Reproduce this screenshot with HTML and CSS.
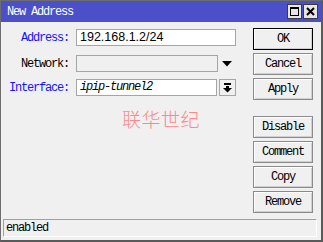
FILE: index.html
```html
<!DOCTYPE html>
<html>
<head>
<meta charset="utf-8">
<link rel="stylesheet" href="styles.css">
</head>
<body>
<div class="window">
  <div class="titlebar">
    <span class="title">New Address</span>
    <div class="tbtns">
      <div class="tbtn"><svg width="13" height="13" viewBox="0 0 13 13"><rect x="2.5" y="2.5" width="8" height="8" fill="none" stroke="#000" stroke-width="1"/><rect x="2" y="2" width="9" height="2" fill="#000"/></svg></div>
      <div class="tbtn"><svg width="13" height="13" viewBox="0 0 13 13"><path d="M3 3 L10 10 M10 3 L3 10" stroke="#000" stroke-width="2"/></svg></div>
    </div>
  </div>
  <div class="main">
    <div class="form">
      <div class="row r1">
        <label class="lbl blue">Address:</label>
        <div class="input w-addr">192.168.1.2/24</div>
      </div>
      <div class="row r2">
        <label class="lbl">Network:</label>
        <div class="input disabled w-net"></div>
        <div class="arrow"><svg width="10" height="6" viewBox="0 0 10 6"><path d="M0 0 H10 L5 5.5 Z" fill="#000"/></svg></div>
      </div>
      <div class="row r3">
        <label class="lbl blue">Interface:</label>
        <div class="input w-if mono-it">ipip-tunnel2</div>
        <div class="ddbtn"><svg width="9" height="10" viewBox="0 0 9 10"><rect x="1" y="0" width="7" height="2" fill="#000"/><rect x="3" y="3" width="3" height="3" fill="#000"/><path d="M0 5 H9 L4.5 9.5 Z" fill="#000"/></svg></div>
      </div>
      <div class="watermark">联华世纪</div>
    </div>
    <div class="buttons">
      <div class="btn default">OK</div>
      <div class="btn">Cancel</div>
      <div class="btn">Apply</div>
      <div class="btn sep">Disable</div>
      <div class="btn">Comment</div>
      <div class="btn">Copy</div>
      <div class="btn">Remove</div>
    </div>
  </div>
  <div class="status">enabled</div>
</div>
</body>
</html>
```

FILE: styles.css
```css
html, body {
  margin: 0;
  padding: 0;
  background: #f0f0f0;
}
.window {
  width: 323px;
  height: 242px;
  box-sizing: border-box;
  border-left: 1px solid #6e6e6e;
  border-top: 1px solid #6e6e6e;
  border-right: 2px solid #5a5a5a;
  border-bottom: 2px solid #5a5a5a;
  background: #f0f0f0;
  display: flex;
  flex-direction: column;
  font-family: "Liberation Mono", "DejaVu Sans Mono", monospace;
  font-size: 12px;
  letter-spacing: -1.2px;
}
.titlebar {
  height: 21px;
  background: #4b50c8;
  display: flex;
  align-items: center;
  justify-content: space-between;
  padding-left: 6px;
  padding-right: 3px;
}
.title {
  color: #fff;
  font-size: 12px;
}
.tbtns {
  display: flex;
  gap: 1px;
}
.tbtn {
  width: 15px;
  height: 15px;
  box-sizing: border-box;
  background: #e6e6e6;
  border: 1px solid #3c3c3c;
  display: flex;
  align-items: center;
  justify-content: center;
}
.main {
  flex: 1;
  display: flex;
  justify-content: space-between;
}
.form {
  padding-top: 7px;
  display: flex;
  flex-direction: column;
}
.row {
  display: flex;
  align-items: center;
  height: 17px;
}
.r2 { margin-top: 9px; }
.r3 { margin-top: 7px; }
.lbl {
  width: 68px;
  text-align: right;
  margin-right: 7px;
  color: #000;
}
.lbl.blue { color: #1414ff; }
.input {
  height: 17px;
  box-sizing: border-box;
  background: #fff;
  border: 1px solid #a5a5a5;
  font-family: "Liberation Sans", Arial, sans-serif;
  font-size: 12.5px;
  letter-spacing: 0;
  line-height: 15px;
  padding-left: 3px;
  color: #000;
}
.input.disabled { background: #f0f0f0; }
.w-addr { width: 160px; }
.w-net { width: 142px; }
.w-if { width: 141px; }
.mono-it {
  font-family: "Liberation Mono", monospace;
  font-style: italic;
  font-size: 12px;
  letter-spacing: -1.2px;
}
.arrow {
  width: 18px;
  display: flex;
  justify-content: center;
  padding-top: 1px;
}
.ddbtn {
  width: 17px;
  height: 17px;
  box-sizing: border-box;
  margin-left: 2px;
  border: 1px solid #a5a5a5;
  background: #f0f0f0;
  display: flex;
  align-items: center;
  justify-content: center;
}
.watermark {
  margin-top: 12px;
  margin-left: 121px;
  font-family: "Noto Sans CJK SC", sans-serif;
  font-weight: 300;
  font-size: 19px;
  line-height: 22px;
  letter-spacing: 0.5px;
  color: #ff8888;
}
.buttons {
  padding-top: 6px;
  padding-right: 8px;
  display: flex;
  flex-direction: column;
  gap: 3px;
}
.btn {
  width: 60px;
  height: 22px;
  box-sizing: border-box;
  border: 1px solid #8a8a8a;
  box-shadow: inset 1px 1px 0 #fff, inset -1px -1px 0 #d0d0d0;
  background: #f0f0f0;
  display: flex;
  align-items: center;
  justify-content: center;
  color: #000;
}
.btn.default {
  border-color: #000;
}
.btn.sep { margin-top: 13px; }
.status {
  margin: 0 4px 3px 2px;
  height: 18px;
  box-sizing: border-box;
  border-top: 1px solid #a0a0a0;
  border-left: 1px solid #a0a0a0;
  border-right: 1px solid #fff;
  border-bottom: 1px solid #fff;
  padding-left: 2px;
  line-height: 16px;
  color: #000;
}
```
